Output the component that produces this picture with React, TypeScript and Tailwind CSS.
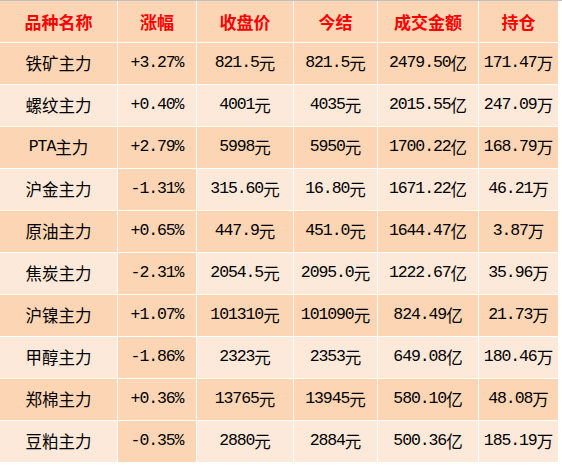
import React from 'react';

interface Row {
  name: string;
  change: string;
  close: string;
  settle: string;
  turnover: string;
  position: string;
}

const headers = ['品种名称', '涨幅', '收盘价', '今结', '成交金额', '持仓'];

const rows: Row[] = [
  { name: '铁矿主力', change: '+3.27%', close: '821.5元', settle: '821.5元', turnover: '2479.50亿', position: '171.47万' },
  { name: '螺纹主力', change: '+0.40%', close: '4001元', settle: '4035元', turnover: '2015.55亿', position: '247.09万' },
  { name: 'PTA主力', change: '+2.79%', close: '5998元', settle: '5950元', turnover: '1700.22亿', position: '168.79万' },
  { name: '沪金主力', change: '-1.31%', close: '315.60元', settle: '16.80元', turnover: '1671.22亿', position: '46.21万' },
  { name: '原油主力', change: '+0.65%', close: '447.9元', settle: '451.0元', turnover: '1644.47亿', position: '3.87万' },
  { name: '焦炭主力', change: '-2.31%', close: '2054.5元', settle: '2095.0元', turnover: '1222.67亿', position: '35.96万' },
  { name: '沪镍主力', change: '+1.07%', close: '101310元', settle: '101090元', turnover: '824.49亿', position: '21.73万' },
  { name: '甲醇主力', change: '-1.86%', close: '2323元', settle: '2353元', turnover: '649.08亿', position: '180.46万' },
  { name: '郑棉主力', change: '+0.36%', close: '13765元', settle: '13945元', turnover: '580.10亿', position: '48.08万' },
  { name: '豆粕主力', change: '-0.35%', close: '2880元', settle: '2884元', turnover: '500.36亿', position: '185.19万' },
];

const DARK = 'bg-[#fcd5b4]';
const LIGHT = 'bg-[#fde9d9]';

// half-width digits like the spreadsheet font: ascii in a mono face, CJK in Noto
const Mixed: React.FC<{ text: string }> = ({ text }) => {
  const parts = text.match(/[\x00-\x7f]+|[^\x00-\x7f]+/g) || [];
  return (
    <>
      {parts.map((p, k) =>
        /^[\x00-\x7f]/.test(p) ? (
          <span key={k} className="font-['Liberation_Mono',monospace] text-[16.5px] tracking-[-1.1px]">
            {p}
          </span>
        ) : (
          <span key={k} className="font-['Noto_Sans_CJK_SC',sans-serif] text-[16.5px]">
            {p}
          </span>
        )
      )}
    </>
  );
};

const App: React.FC = () => {
  return (
    <div className="w-[562px] h-[465px] bg-white border-t border-[#c0c0c0] font-['Noto_Sans_CJK_SC',sans-serif]">
      <div className="grid w-[558px] grid-cols-[117px_78px_96px_83px_100px_79px] auto-rows-[41px] gap-px bg-white">
        {/* header */}
        {headers.map((h) => (
          <div key={h} className={`${DARK} flex items-center justify-center text-[17px] font-bold text-[#ff0000]`}>
            {h}
          </div>
        ))}

        {/* body rows: odd rows light, the 涨幅 column stays dark except on 螺纹 */}
        {rows.map((r, i) => {
          const bg = i % 2 === 0 ? DARK : LIGHT;
          const changeBg = i === 1 ? LIGHT : DARK;
          const cells = [r.name, r.change, r.close, r.settle, r.turnover, r.position];
          return cells.map((c, j) => (
            <div
              key={`${i}-${j}`}
              className={`${j === 1 ? changeBg : bg} flex items-center justify-center whitespace-nowrap text-black`}
            >
              <Mixed text={c} />
            </div>
          ));
        })}
      </div>
    </div>
  );
};

export default App;
